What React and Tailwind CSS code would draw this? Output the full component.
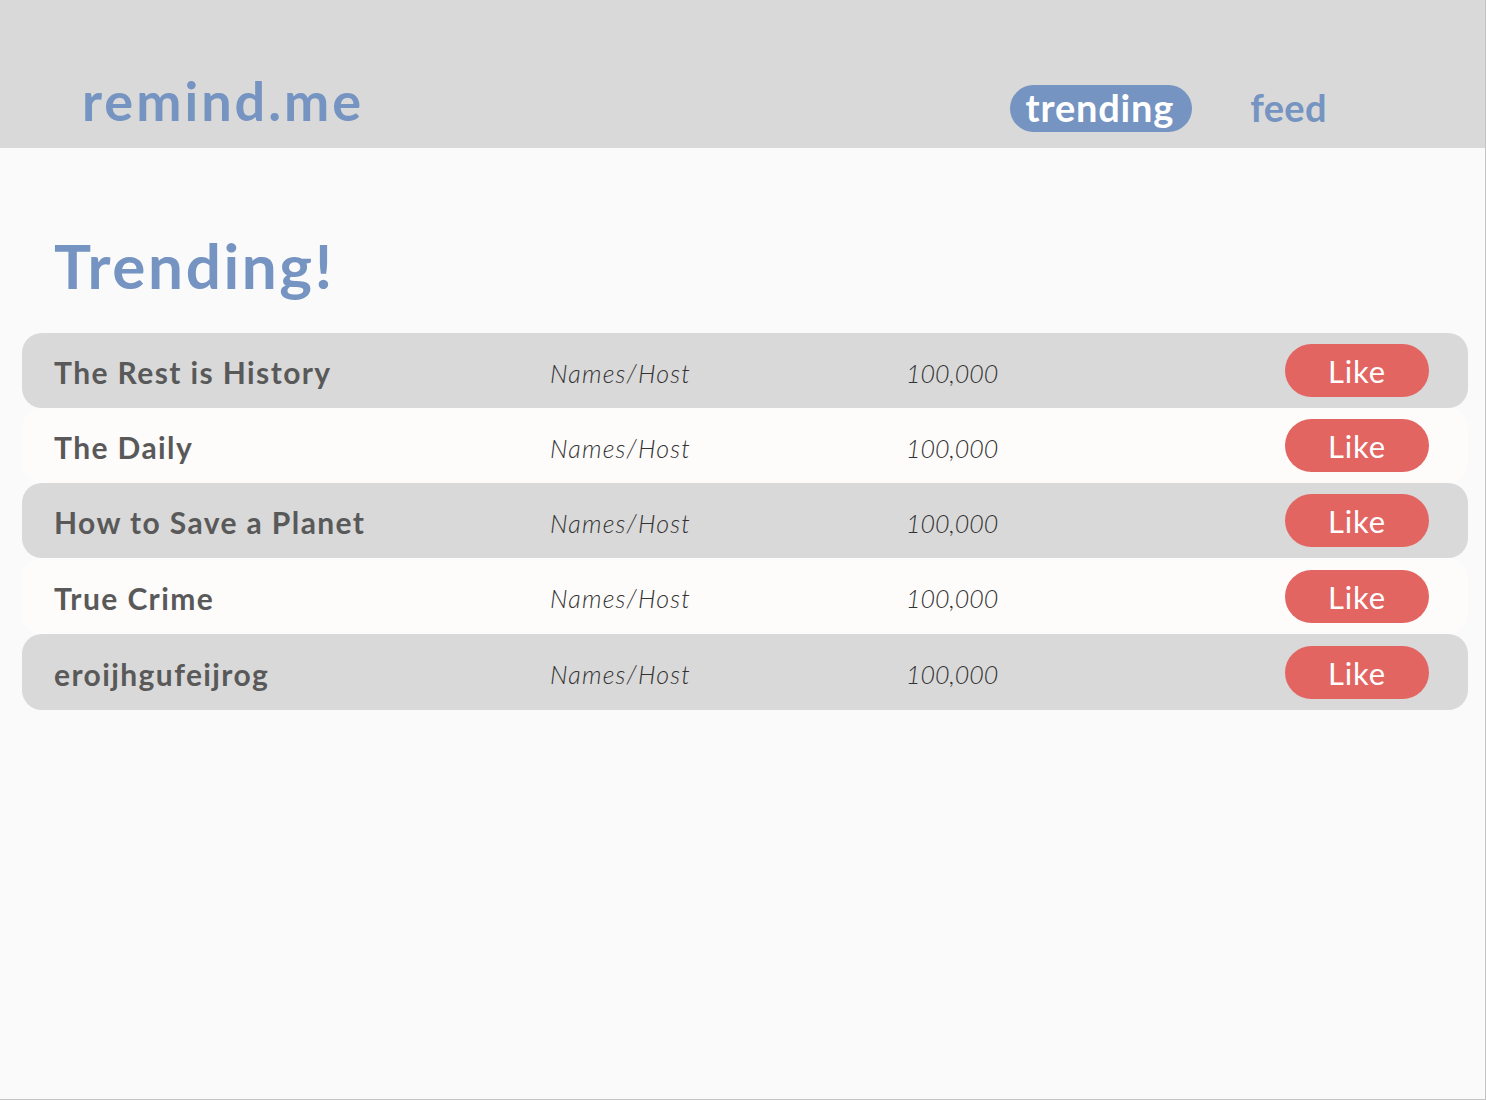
import React from "react";

const rows = [
  { t: "The Rest is History", h: "h-[75px]" },
  { t: "The Daily", h: "h-[75px]" },
  { t: "How to Save a Planet", h: "h-[75px]" },
  { t: "True Crime", h: "h-[76px]" },
  { t: "eroijhgufeijrog", h: "h-[76px]" },
];

export default function App() {
  return (
    <div
      className="w-[1486px] h-[1100px] bg-[#fafafa] border-r border-b border-[#c4c4c4] flex flex-col"
      style={{ fontFamily: "Lato, 'Open Sans', sans-serif" }}
    >
      <header className="h-[148px] shrink-0 bg-[#d9d9d9] flex items-end pb-[12px]">
        <div className="pl-[82px] text-[54px] font-bold leading-none text-[#7594c1] pb-[8px] tracking-[3px]">
          remind.me
        </div>
        <nav className="ml-auto mr-[158px] flex items-center gap-[58px] mb-[4px]">
          <span className="h-[47px] pl-[16px] pr-[18px] ml-[2px] rounded-full bg-[#7594c1] text-white text-[38px] font-bold leading-none flex items-center pb-[4px] tracking-[0.8px]">
            trending
          </span>
          <span className="text-[38px] font-bold leading-none text-[#7594c1] pb-[4px] tracking-[0.4px]">feed</span>
        </nav>
      </header>
      <main className="pl-[22px] pr-[17px] pt-[86px]">
        <h1 className="pl-[32px] text-[62px] font-bold leading-none text-[#7594c1] tracking-[2.6px]">
          Trending!
        </h1>
        <div className="mt-[37px] flex flex-col">
          {rows.map((r, i) => (
            <div
              key={i}
              className={`${r.h} rounded-[20px] flex items-center pl-[32px] ${
                i % 2 === 0 ? "bg-[#d9d9d9]" : "bg-[#fdfcfb]"
              }`}
            >
              <span className="w-[496px] pt-[4px] text-[30px] font-bold text-[#595959] tracking-[1.4px]">{r.t}</span>
              <span className="w-[356px] pt-[6px] text-[25px] italic font-light text-[#333] tracking-[1.2px]">Names/Host</span>
              <span className="w-[379px] pt-[6px] text-[25px] italic font-light text-[#333]">100,000</span>
              <button className="w-[144px] h-[53px] rounded-full bg-[#e26562] text-white text-[31px] leading-none tracking-[0.8px] pt-[2px]">
                Like
              </button>
            </div>
          ))}
        </div>
      </main>
    </div>
  );
}
